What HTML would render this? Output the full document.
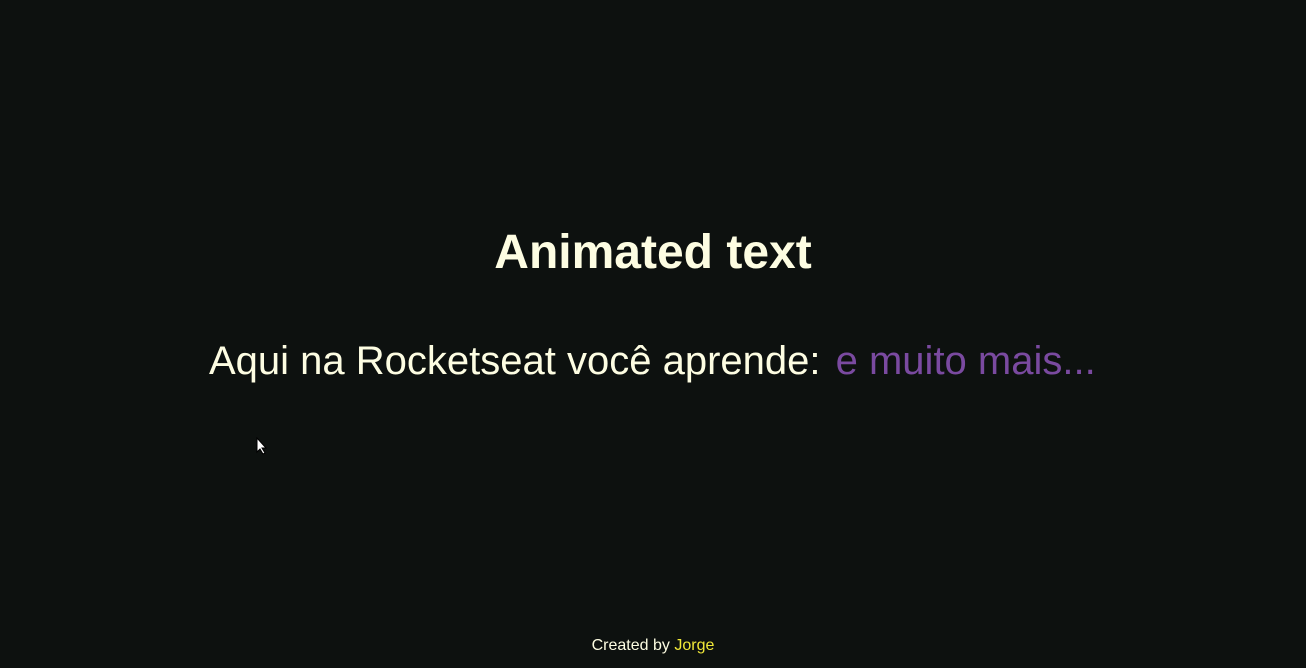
<!DOCTYPE html>
<html><head><meta charset="utf-8"><style>
html,body{margin:0;padding:0;width:1306px;height:668px;overflow:hidden;background:#0d110f;font-family:"Liberation Sans",sans-serif;}
h1{position:absolute;left:0;width:1306px;top:228px;margin:0;text-align:center;font-size:48px;font-weight:bold;color:#fdfde2;line-height:50px;}
.s{position:absolute;left:209px;top:338px;font-size:40px;line-height:46px;color:#fdfde2;white-space:nowrap;}
.p{color:#7a4aa0;margin-left:4px;}
.f{position:absolute;left:0;width:1306px;top:637px;text-align:center;font-size:16px;color:#fdfde2;}
.f span{color:#f0e838;}
</style></head><body>
<h1>Animated text</h1>
<div class="s">Aqui na Rocketseat você aprende: <span class="p">e muito mais...</span></div>
<svg style="position:absolute;left:256px;top:437px" width="12" height="18" viewBox="0 0 12 18"><path d="M1 1 L1 15 L4 12 L7 17 L9 16 L6 11 L10 11 Z" fill="#fff" stroke="#000" stroke-width="1"/></svg>
<div class="f">Created by <span>Jorge</span></div>
</body></html>
